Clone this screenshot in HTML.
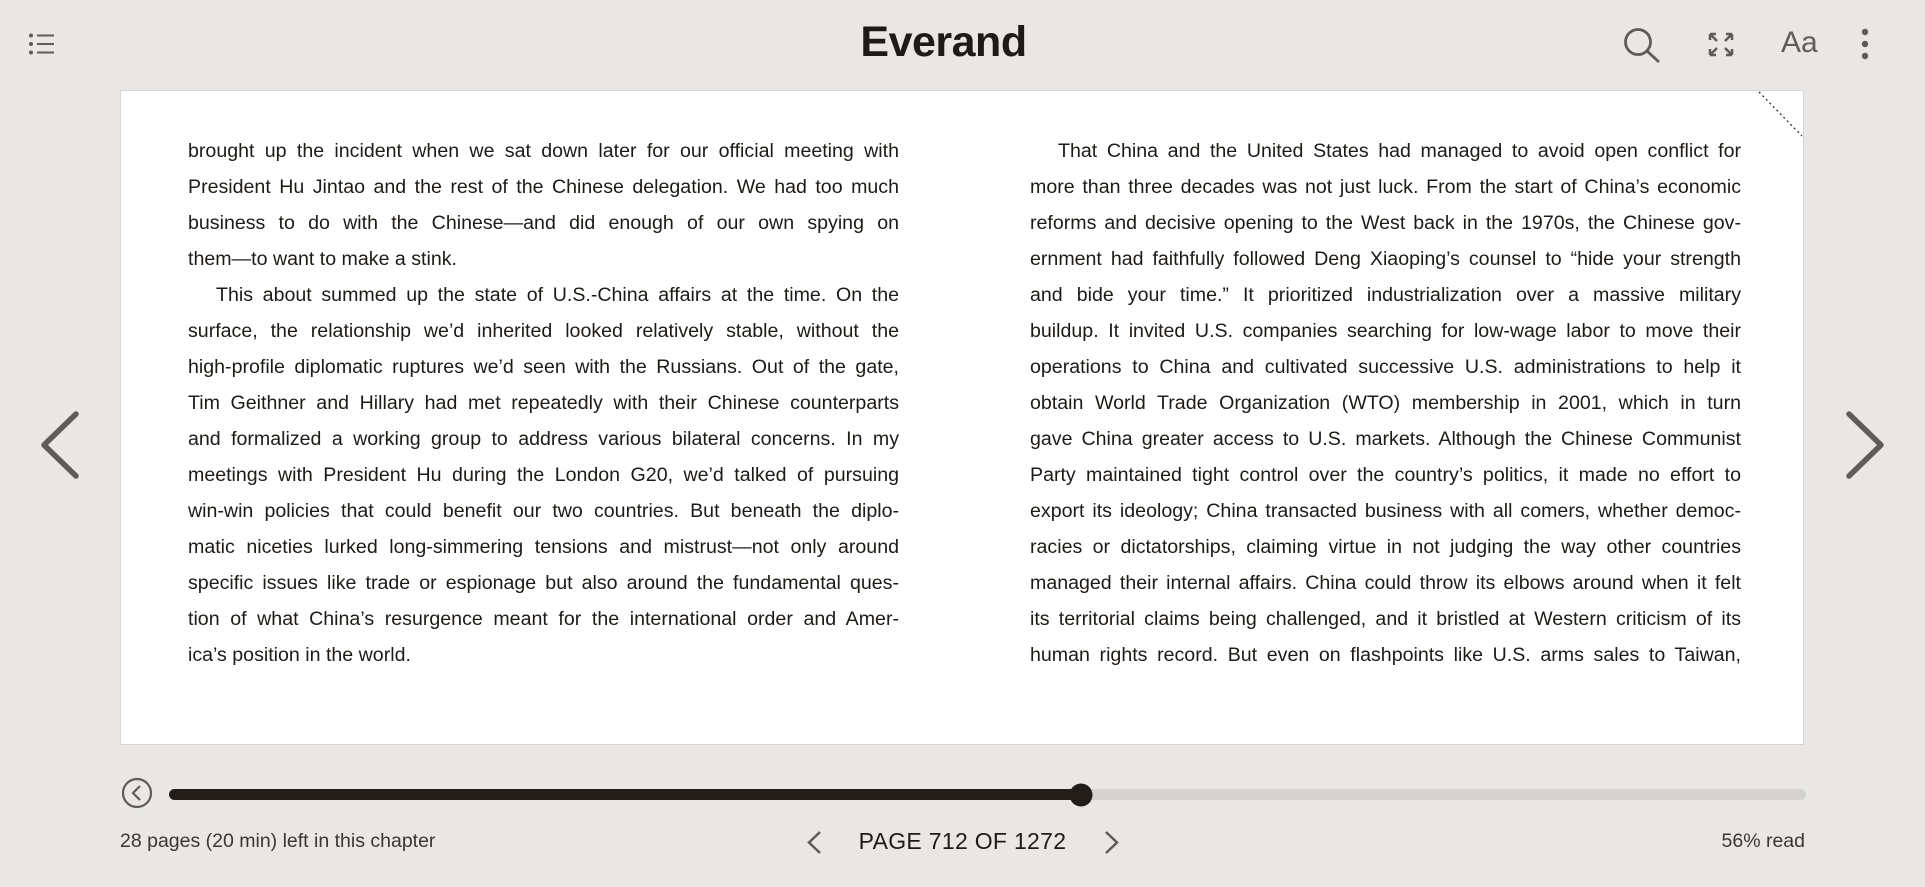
<!DOCTYPE html>
<html><head><meta charset="utf-8">
<style>
html,body{margin:0;padding:0}
body{width:1925px;height:887px;background:#e8e7e5;position:relative;overflow:hidden;font-family:"Liberation Sans",sans-serif}
.logo{position:absolute;left:-19px;width:1925px;top:18px;text-align:center;font-size:43px;font-weight:bold;color:#1e1a16;letter-spacing:-0.5px}
.page{position:absolute;left:120px;top:90px;width:1684px;height:655px;background:#fff;border:1px solid #d6d5d3;box-sizing:border-box}
.col{position:absolute;top:0;font-size:19.6px;color:#1e1a16;width:711px}
.col div{height:36px;line-height:36px;text-align:justify;text-align-last:justify;white-space:nowrap}
.col div.l{text-align-last:left}
.col div.i{padding-left:28px}
.bot{position:absolute;font-size:19.5px;color:#3a3633;top:830px}
</style></head><body>
<svg style="position:absolute;left:0;top:0" width="1925" height="887">
 <g fill="#5f5b57"><circle cx="31" cy="35.5" r="2"/><circle cx="31" cy="44" r="2"/><circle cx="31" cy="52.5" r="2"/></g>
 <g stroke="#5f5b57" stroke-width="2"><line x1="37" y1="35.5" x2="54" y2="35.5"/><line x1="37" y1="44" x2="54" y2="44"/><line x1="37" y1="52.5" x2="54" y2="52.5"/></g>
 <circle cx="1638" cy="42" r="12.5" fill="none" stroke="#5f5b57" stroke-width="2.8"/>
 <line x1="1647" y1="51" x2="1659" y2="62" stroke="#5f5b57" stroke-width="2.8"/>
 <g stroke="#5f5b57" stroke-width="2.5" fill="none">
  <path d="M1710 34l7 7M1710 34h6M1710 34v6"/>
  <path d="M1732 34l-7 7M1732 34h-6M1732 34v6"/>
  <path d="M1710 55l7 -7M1710 55h6M1710 55v-6"/>
  <path d="M1732 55l-7 -7M1732 55h-6M1732 55v-6"/>
 </g>
 <g fill="#5f5b57"><circle cx="1865" cy="32" r="3.2"/><circle cx="1865" cy="44" r="3.2"/><circle cx="1865" cy="56" r="3.2"/></g>
 <path d="M76 414L44 445L76 476" fill="none" stroke="#5f5b57" stroke-width="5.5" stroke-linecap="round" stroke-linejoin="round"/>
 <path d="M1849 414L1881 445L1849 476" fill="none" stroke="#5f5b57" stroke-width="5.5" stroke-linecap="round" stroke-linejoin="round"/>
 <circle cx="137" cy="793" r="14" fill="none" stroke="#5f5b57" stroke-width="2.2"/>
 <path d="M140 786L133 793L140 800" fill="none" stroke="#5f5b57" stroke-width="2.2"/>
 <rect x="169" y="789" width="1637" height="11" rx="5.5" fill="#d3d2d0"/>
 <rect x="169" y="789" width="912" height="11" rx="5.5" fill="#221d18"/>
 <circle cx="1081" cy="795" r="11.5" fill="#221d18"/>
 <path d="M820 832L809 842.5L820 853" fill="none" stroke="#5f5b57" stroke-width="2.5"/>
 <path d="M1106 832L1117 842.5L1106 853" fill="none" stroke="#5f5b57" stroke-width="2.5"/>
</svg>
<div style="position:absolute;left:1781px;top:26px;font-size:30px;color:#5f5b57">Aa</div>
<div class="logo">Everand</div>
<div class="page">
 <svg style="position:absolute;left:1636px;top:0" width="48" height="48"><line x1="2" y1="1" x2="45" y2="45" stroke="#333" stroke-width="1.3" stroke-dasharray="2 3"/></svg>
 <div class="col" style="left:67px;top:42px">
  <div>brought up the incident when we sat down later for our official meeting with</div>
  <div>President Hu Jintao and the rest of the Chinese delegation. We had too much</div>
  <div>business to do with the Chinese—and did enough of our own spying on</div>
  <div class="l">them—to want to make a stink.</div>
  <div class="i">This about summed up the state of U.S.-China affairs at the time. On the</div>
  <div>surface, the relationship we’d inherited looked relatively stable, without the</div>
  <div>high-profile diplomatic ruptures we’d seen with the Russians. Out of the gate,</div>
  <div>Tim Geithner and Hillary had met repeatedly with their Chinese counterparts</div>
  <div>and formalized a working group to address various bilateral concerns. In my</div>
  <div>meetings with President Hu during the London G20, we’d talked of pursuing</div>
  <div>win-win policies that could benefit our two countries. But beneath the diplo-</div>
  <div>matic niceties lurked long-simmering tensions and mistrust—not only around</div>
  <div>specific issues like trade or espionage but also around the fundamental ques-</div>
  <div>tion of what China’s resurgence meant for the international order and Amer-</div>
  <div class="l">ica’s position in the world.</div>
 </div>
 <div class="col" style="left:909px;top:42px">
  <div class="i">That China and the United States had managed to avoid open conflict for</div>
  <div>more than three decades was not just luck. From the start of China’s economic</div>
  <div>reforms and decisive opening to the West back in the 1970s, the Chinese gov-</div>
  <div>ernment had faithfully followed Deng Xiaoping’s counsel to “hide your strength</div>
  <div>and bide your time.” It prioritized industrialization over a massive military</div>
  <div>buildup. It invited U.S. companies searching for low-wage labor to move their</div>
  <div>operations to China and cultivated successive U.S. administrations to help it</div>
  <div>obtain World Trade Organization (WTO) membership in 2001, which in turn</div>
  <div>gave China greater access to U.S. markets. Although the Chinese Communist</div>
  <div>Party maintained tight control over the country’s politics, it made no effort to</div>
  <div>export its ideology; China transacted business with all comers, whether democ-</div>
  <div>racies or dictatorships, claiming virtue in not judging the way other countries</div>
  <div>managed their internal affairs. China could throw its elbows around when it felt</div>
  <div>its territorial claims being challenged, and it bristled at Western criticism of its</div>
  <div>human rights record. But even on flashpoints like U.S. arms sales to Taiwan,</div>
 </div>
</div>
<div class="bot" style="left:120px">28 pages (20 min) left in this chapter</div>
<div class="bot" style="left:0;width:1925px;text-align:center;top:828px;font-size:23px;color:#1e1a16;letter-spacing:0.3px">PAGE 712 OF 1272</div>
<div class="bot" style="right:120px">56% read</div>
</body></html>
